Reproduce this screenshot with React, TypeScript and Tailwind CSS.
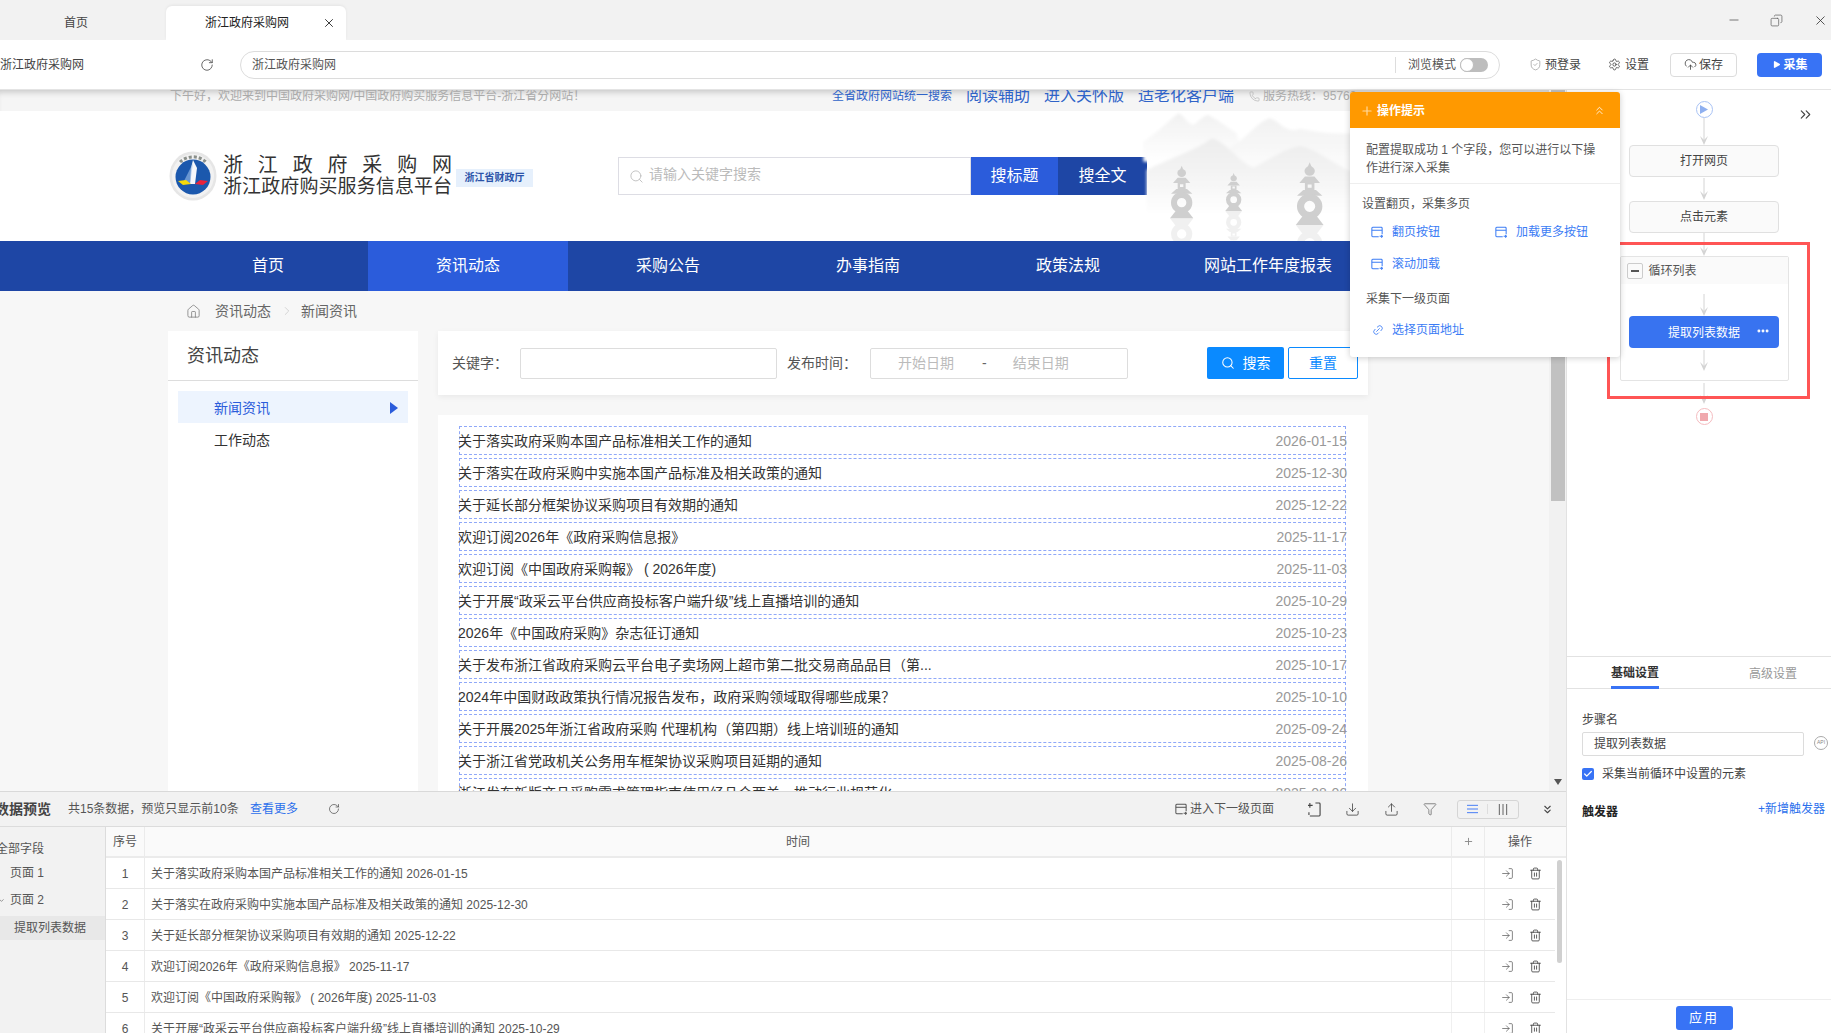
import React from "react";
import {
  RotateCw, X, ShieldCheck, Settings, Search, House, ChevronRight, ChevronsRight, ChevronsUp, ChevronsDown,
  Plus, Trash2, Upload, Download, Filter, Link2, LogIn, CloudUpload, Play, Minus, Ellipsis, Check, ChevronDown, Copy, Phone,
} from "lucide-react";

const listRows: [string, string][] = [
  ["关于落实政府采购本国产品标准相关工作的通知", "2026-01-15"],
  ["关于落实在政府采购中实施本国产品标准及相关政策的通知", "2025-12-30"],
  ["关于延长部分框架协议采购项目有效期的通知", "2025-12-22"],
  ["欢迎订阅2026年《政府采购信息报》", "2025-11-17"],
  ["欢迎订阅《中国政府采购報》 ( 2026年度)", "2025-11-03"],
  ["关于开展“政采云平台供应商投标客户端升级”线上直播培训的通知", "2025-10-29"],
  ["2026年《中国政府采购》杂志征订通知", "2025-10-23"],
  ["关于发布浙江省政府采购云平台电子卖场网上超市第二批交易商品品目（第...", "2025-10-17"],
  ["2024年中国财政政策执行情况报告发布，政府采购领域取得哪些成果？", "2025-10-10"],
  ["关于开展2025年浙江省政府采购 代理机构（第四期）线上培训班的通知", "2025-09-24"],
  ["关于浙江省党政机关公务用车框架协议采购项目延期的通知", "2025-08-26"],
  ["浙江发布新版商品采购需求管理指南使用经品合两关，推动行业规范化", "2025-08-06"],
];

const tableRows = listRows.slice(0, 6);

function PageIcon({ className }: { className?: string }) {
  return (
    <svg viewBox="0 0 14 14" className={className} fill="none" stroke="currentColor" strokeWidth="1.2">
      <path d="M9 12.5H2a1 1 0 0 1-1-1v-9a1 1 0 0 1 1-1h10a1 1 0 0 1 1 1v7" />
      <path d="M1 5h12" />
      <path d="M10 12h3.5M12 10.5l1.5 1.5-1.5 1.5" />
    </svg>
  );
}

function Arrow({ h }: { h: number }) {
  return (
    <svg width="10" height={h} viewBox={`0 0 10 ${h}`} className="block shrink-0">
      <line x1="5" y1="0" x2="5" y2={h - 4} stroke="#d4d4d4" strokeWidth="1" />
      <path d={`M1 ${h - 9} L5 ${h - 5} L9 ${h - 9} L5 ${h} Z`} fill="#d4d4d4" />
    </svg>
  );
}

function Pagoda({ x, base, s }: { x: number; base: number; s: number }) {
  const body = (
    <>
      <path d="M0 0L5 12H-5Z" />
      <ellipse cx="0" cy="22" rx="13" ry="12" />
      <path d="M-26 52H26L12 36H-12Z" />
      <path d="M-12 52H12V70H-12ZM-5 56V64H5V56Z" fillRule="evenodd" />
      <path d="M-32 84H32L16 70H-16Z" />
      <path fillRule="evenodd" d="M0 79a32 32 0 1 0 0 64a32 32 0 1 0 0-64ZM0 97a14 14 0 1 1 0 28a14 14 0 1 1 0-28Z" />
      <path d="M-35 158H35L18 136H-18Z" />
    </>
  );
  return (
    <g fill="#cfcfcf">
      <g transform={`translate(${x} ${base - 158 * s}) scale(${s})`}>{body}</g>
      <g transform={`translate(${x} ${base + 158 * s}) scale(${s} ${-s})`} opacity="0.3">{body}</g>
    </g>
  );
}

function Mountains() {
  return (
    <svg viewBox="0 18 660 390" className="absolute left-[1130px] top-0 w-[220px] h-[130px]">
      <defs>
        <linearGradient id="mfar" x1="0" y1="0" x2="0" y2="1">
          <stop offset="0" stopColor="#f1f1f1" />
          <stop offset="1" stopColor="#ffffff" />
        </linearGradient>
        <linearGradient id="mfront" x1="0" y1="0" x2="0" y2="1">
          <stop offset="0" stopColor="#ededed" />
          <stop offset="0.55" stopColor="#f5f5f5" />
          <stop offset="1" stopColor="#ffffff" />
        </linearGradient>
        <filter id="soft" x="-10%" y="-10%" width="120%" height="120%">
          <feGaussianBlur stdDeviation="4" />
        </filter>
      </defs>
      <g filter="url(#soft)">
        <path d="M40 110C80 85 120 45 145 25C160 28 172 58 190 60C205 50 220 32 235 30C255 40 285 62 320 85L340 170H40Z" fill="url(#mfar)" />
        <path d="M300 125C350 105 380 50 420 40C450 48 465 88 510 72C550 78 600 90 680 85V230H300Z" fill="url(#mfar)" />
        <path d="M50 195C120 160 200 135 245 100C290 110 330 175 370 188C410 170 460 130 510 122C560 130 610 180 680 205V330H50Z" fill="url(#mfront)" />
      </g>
      <Pagoda x={155} base={340} s={1} />
      <Pagoda x={311} base={318} s={0.72} />
      <Pagoda x={539} base={360} s={1.19} />
    </svg>
  );
}

function Emblem() {
  return (
    <svg viewBox="0 0 48 50" className="w-[48px] h-[50px] shrink-0">
      <ellipse cx="24" cy="25" rx="23.5" ry="24.5" fill="#e6e6e6" />
      <ellipse cx="24" cy="25" rx="21" ry="22" fill="#f2f2f2" />
      <path d="M11 11A19 19 0 0 1 37 11" fill="none" stroke="#8a8f8a" strokeWidth="3" strokeDasharray="3 2" />
      <circle cx="24" cy="26" r="17.5" fill="#1b58ad" />
      <path d="M24 9L28 17L26 33L21 33L22 17Z" fill="#f5f7fb" />
      <path d="M24 12L21 33L15 30Z" fill="#9cc0ea" opacity="0.6" />
      <path d="M9 30L17 29L22 33L14 34Z" fill="#f5d90a" />
      <path d="M39 30L31 29L26 33L34 34Z" fill="#e9233b" />
    </svg>
  );
}

function RowIcons() {
  return (
    <div className="w-[71px] flex items-center h-full border-l border-[#f0f0f0] pl-[16px] gap-[15px] text-[#555]">
      <LogIn size={13} strokeWidth={1.3} />
      <Trash2 size={13} strokeWidth={1.6} className="text-[#444]" />
    </div>
  );
}

export default function App() {
  return (
    <div className="relative w-[1831px] h-[1033px] overflow-hidden flex flex-col bg-white text-[#333] text-[12px] font-['Liberation_Sans','Noto_Sans_CJK_SC',sans-serif]">
      {/* tab bar */}
      <div className="h-[40px] shrink-0 bg-[#f2f2f2] flex items-end relative">
        <div className="w-[166px] h-[34px] flex items-center justify-center pr-[14px] text-[#444]">首页</div>
        <div className="w-[180px] h-[34px] bg-white rounded-t-md flex items-center pl-[39px] text-[#222] shadow-[0_-1px_3px_rgba(0,0,0,0.06)]">
          <span>浙江政府采购网</span>
          <X size={14} strokeWidth={1.5} className="ml-[33px]" />
        </div>
        <div className="ml-auto h-[40px] flex items-center text-[#666]">
          <Minus size={14} strokeWidth={1.5} className="mr-[29px]" />
          <Copy size={13} strokeWidth={1.4} className="mr-[30px] -scale-x-100" />
          <X size={15} strokeWidth={1.3} className="mr-[3px] text-[#333]" />
        </div>
      </div>
      {/* address toolbar */}
      <div className="h-[50px] shrink-0 bg-white border-b border-[#e4e4e4] flex items-center relative z-10 text-[#444] whitespace-nowrap">
        <span className="w-[84px] shrink-0">浙江政府采购网</span>
        <RotateCw size={14} strokeWidth={1.5} className="ml-[116px] shrink-0 text-[#555]" />
        <div className="ml-[26px] w-[1260px] h-[28px] border-[1.5px] border-[#dcdcdc] rounded-[14px] flex items-center pl-[11px] pr-[11px]">
          <span className="text-[#555]">浙江政府采购网</span>
          <div className="ml-auto flex items-center">
            <div className="w-px h-[16px] bg-[#ddd] mr-[12px]" />
            <span className="w-[52px] text-[#555]">浏览模式</span>
            <div className="w-[28px] h-[14px] rounded-full bg-[#bdbdbd] relative">
              <div className="absolute left-0 top-0 w-[14px] h-[14px] rounded-full bg-white border border-[#bdbdbd]" />
            </div>
          </div>
        </div>
        <ShieldCheck size={13} strokeWidth={1.3} className="ml-[29px] text-[#999]" />
        <span className="ml-[3px]">预登录</span>
        <Settings size={13} strokeWidth={1.5} className="ml-[27px]" />
        <span className="ml-[4px]">设置</span>
        <div className="ml-[21px] w-[67px] h-[24px] border border-[#dcdcdc] rounded-[4px] flex items-center justify-center gap-[2px]">
          <CloudUpload size={13} strokeWidth={1.5} />
          <span>保存</span>
        </div>
        <div className="ml-[20px] w-[65px] h-[24px] rounded-[4px] bg-[#3873f5] text-white font-bold flex items-center justify-center gap-[3px]">
          <Play size={9} fill="white" strokeWidth={0} />
          <span>采集</span>
        </div>
      </div>

      {/* work area */}
      <div className="flex-1 min-h-0 flex">
        <div className="w-[1566px] shrink-0 flex flex-col">
          {/* web view */}
          <div className="h-[701px] shrink-0 flex overflow-hidden">
            <div className="w-[1549px] shrink-0 flex flex-col bg-[#f7f7f7]">
              <div className="h-[21px] shrink-0 overflow-hidden bg-[#f5f5f5] shadow-[inset_0_6px_6px_-4px_rgba(0,0,0,0.2)] pl-[170px] flex items-center pb-[9px] whitespace-nowrap">
                <span className="text-[#aaa] w-[662px]">下午好，欢迎来到中国政府采购网/中国政府购买服务信息平台-浙江省分网站！</span>
                <span className="text-[#2f63c8]">全省政府网站统一搜索</span>
                <span className="text-[#2f63c8] text-[16px] ml-[14px]">阅读辅助</span>
                <span className="text-[#2f63c8] text-[16px] ml-[14px]">进入关怀版</span>
                <span className="text-[#2f63c8] text-[16px] ml-[14px]">适老化客户端</span>
                <Phone size={11} strokeWidth={1.3} className="ml-[15px] text-[#aaa]" />
                <span className="text-[#aaa] ml-[3px]">服务热线：95763</span>
              </div>
              <div className="relative h-[130px] shrink-0 bg-white flex items-center pl-[169px] overflow-hidden">
                <Mountains />
                <Emblem />
                <div className="ml-[6px] w-[229px] text-[#333]">
                  <div className="flex justify-between text-[20px] leading-[22px]">
                    {"浙江政府采购网".split("").map((c, i) => (
                      <span key={i}>{c}</span>
                    ))}
                  </div>
                  <div className="text-[19px] tracking-[0.1px] leading-[22px] whitespace-nowrap">浙江政府购买服务信息平台</div>
                </div>
                <div className="ml-[4px] mt-[3px] w-[77px] h-[18px] bg-[#e6f0fc] text-[#2a52a8] text-[10px] font-bold flex items-center justify-center">浙江省财政厅</div>
                <div className="ml-[85px] w-[353px] h-[38px] bg-white border border-[#dddde4] flex items-center pl-[10px] text-[14px] text-[#bbb]">
                  <Search size={15} strokeWidth={1.4} className="mr-[5px]" />
                  <span className="-mt-[3px]">请输入关键字搜索</span>
                </div>
                <div className="w-[87px] h-[38px] bg-[#2b5cdb] text-white text-[16px] flex items-center justify-center">搜标题</div>
                <div className="w-[89px] h-[38px] bg-[#1e46a5] text-white text-[16px] flex items-center justify-center">搜全文</div>
              </div>
              <div className="h-[50px] shrink-0 bg-[#1e46a5] flex pl-[168px] text-white text-[16px]">
                {["首页", "资讯动态", "采购公告", "办事指南", "政策法规", "网站工作年度报表"].map((n, i) => (
                  <div key={n} className={i === 1 ? "w-[200px] flex items-center justify-center bg-[#2b5cdb]" : "w-[200px] flex items-center justify-center"}>
                    {n}
                  </div>
                ))}
              </div>
              <div className="flex-1 min-h-0 pl-[168px] overflow-hidden">
                <div className="h-[40px] flex items-center text-[14px] text-[#666] pl-[18px]">
                  <House size={15} strokeWidth={1.2} className="text-[#777]" />
                  <span className="ml-[14px]">资讯动态</span>
                  <ChevronRight size={14} strokeWidth={1} className="ml-[9px] text-[#bbb]" />
                  <span className="ml-[7px]">新闻资讯</span>
                </div>
                <div className="flex gap-[20px]">
                  <div className="w-[250px] h-[500px] bg-white shrink-0">
                    <div className="h-[50px] border-b border-[#ddd] flex items-center pl-[19px] pt-[2px] text-[18px] text-[#444]">资讯动态</div>
                    <div className="mt-[10px] mx-[10px] h-[32px] bg-[#edf4fe] flex items-center pl-[36px] pr-[10px] pt-[2px] text-[14px] text-[#2b5cdb] justify-between">
                      <span>新闻资讯</span>
                      <svg width="8" height="12" viewBox="0 0 8 12"><path d="M0 0L8 6L0 12Z" fill="#2b5cdb" /></svg>
                    </div>
                    <div className="mx-[10px] h-[34px] flex items-center pl-[36px] text-[14px] text-[#333]">工作动态</div>
                  </div>
                  <div className="w-[930px] shrink-0">
                    <div className="h-[64px] bg-white flex items-center pl-[14px] text-[14px] text-[#555] shadow-[0_2px_6px_rgba(0,0,0,0.06)] whitespace-nowrap">
                      <span className="w-[68px] shrink-0">关键字：</span>
                      <div className="w-[257px] h-[31px] border border-[#ddd] rounded-[2px] shrink-0" />
                      <span className="ml-[10px] w-[83px] shrink-0">发布时间：</span>
                      <div className="w-[258px] h-[31px] border border-[#ddd] rounded-[2px] shrink-0 flex items-center text-[#bbb] pl-[27px]">
                        <span>开始日期</span>
                        <span className="ml-[28px] text-[#666]">-</span>
                        <span className="ml-[26px]">结束日期</span>
                      </div>
                      <div className="ml-[79px] w-[77px] h-[32px] shrink-0 rounded-[2px] bg-[#0a8aff] text-white flex items-center justify-center gap-[8px]">
                        <Search size={14} strokeWidth={1.8} />
                        <span>搜索</span>
                      </div>
                      <div className="ml-[4px] w-[70px] h-[32px] shrink-0 rounded-[2px] border border-[#0a8aff] text-[#0a8aff] flex items-center justify-center">重置</div>
                    </div>
                    <div className="mt-[20px] bg-white px-[21px] pt-[11px] h-[500px] text-[14px]">
                      {listRows.map(([t, d]) => (
                        <div key={d} className="h-[29px] mb-[3px] w-[887px] border border-dashed border-[#8fa8f8] flex items-center justify-between pt-[2px]">
                          <span className="-ml-[2px] text-[#333] whitespace-nowrap">{t}</span>
                          <span className="-mr-[2px] text-[#999] whitespace-nowrap">{d}</span>
                        </div>
                      ))}
                    </div>
                  </div>
                </div>
              </div>
            </div>
            {/* page scrollbar */}
            <div className="w-[17px] shrink-0 bg-[#f1f1f1] flex flex-col items-center">
              <div className="w-[14px] h-[411px] bg-[#c1c1c1]" />
              <svg width="8" height="6" viewBox="0 0 8 6" className="mt-auto mb-[6px]"><path d="M0 0H8L4 6Z" fill="#555" /></svg>
            </div>
          </div>
          {/* data preview */}
          <div className="flex-1 min-h-0 border-t border-[#d9d9d9] bg-[#f2f2f2] flex flex-col overflow-hidden">
            <div className="h-[35px] shrink-0 flex items-center border-b border-[#dcdcdc] whitespace-nowrap">
              <span className="-ml-[5px] w-[73px] text-[14px] font-bold text-[#444]">数据预览</span>
              <span className="w-[182px] text-[#555]">共15条数据，预览只显示前10条</span>
              <span className="text-[#2b6fec] w-[78px]">查看更多</span>
              <RotateCw size={12} strokeWidth={1.5} className="text-[#555]" />
              <div className="ml-auto flex items-center text-[#555]">
                <PageIcon className="w-[12px] h-[12px]" />
                <span className="ml-[3px] w-[118px]">进入下一级页面</span>
                <svg viewBox="0 0 14 16" className="w-[13px] h-[15px] mr-[24px]" fill="none" stroke="#444" strokeWidth="1.2">
                  <path d="M8 1H12a1 1 0 0 1 1 1V14a1 1 0 0 1-1 1H2" />
                  <path d="M1 11V14M2 1V6M0 3.5H5" />
                </svg>
                <Download size={15} strokeWidth={1.3} className="mr-[24px] text-[#444]" />
                <Upload size={15} strokeWidth={1.3} className="mr-[24px] text-[#444]" />
                <Filter size={14} strokeWidth={1.3} className="mr-[20px] text-[#666]" />
                <div className="w-[62px] h-[19px] border border-[#d5d5d5] rounded-[3px] flex items-center">
                  <svg viewBox="0 0 12 10" className="w-[11px] h-[10px] ml-[9px]" stroke="#3873f5" strokeWidth="1"><path d="M0 1H12M0 5H12M0 9H12" /></svg>
                  <div className="w-px h-[10px] bg-[#ddd] ml-[9px]" />
                  <svg viewBox="0 0 10 12" className="w-[10px] h-[11px] ml-[10px]" stroke="#555" strokeWidth="1"><path d="M1 0V12M5 0V12M9 0V12" /></svg>
                </div>
                <ChevronsDown size={13} strokeWidth={2} className="ml-[22px] mr-[12px] text-[#444]" />
              </div>
            </div>
            <div className="flex-1 min-h-0 flex">
              <div className="w-[106px] shrink-0 border-r border-[#dcdcdc] whitespace-nowrap text-[#555] pt-[13px]">
                <div className="-ml-[4px] h-[18px] flex items-center">全部字段</div>
                <div className="mt-[6px] pl-[10px] h-[18px] flex items-center">页面 1</div>
                <div className="mt-[9px] h-[18px] flex items-center">
                  <ChevronDown size={7} strokeWidth={2} className="-ml-[2px] mr-[5px]" />
                  <span>页面 2</span>
                </div>
                <div className="mt-[7px] h-[24px] bg-[#e8e8e8] pl-[14px] flex items-center">提取列表数据</div>
              </div>
              <div className="flex-1 min-w-0 bg-white relative">
                <div className="h-[31px] flex bg-[#fafafa] border-b-2 border-[#ebebeb] text-[#555] pr-[11px]">
                  <div className="w-[39px] flex items-center justify-center border-r border-[#ebebeb]">序号</div>
                  <div className="flex-1 flex items-center justify-center pt-[1px]">时间</div>
                  <div className="w-[33px] flex items-center justify-center border-l border-[#ebebeb]"><Plus size={11} strokeWidth={2} className="text-[#888]" /></div>
                  <div className="w-[71px] flex items-center justify-center border-l border-[#ebebeb]">操作</div>
                </div>
                {tableRows.map(([t, d], i) => (
                  <div key={d} className="h-[31px] flex border-b border-[#e8e8e8] mr-[11px] text-[#555]">
                    <div className="w-[39px] flex items-center justify-center border-r border-[#ebebeb] pt-[1px]">{i + 1}</div>
                    <div className="flex-1 flex items-center pl-[6px] pt-[1px] whitespace-nowrap">{t} {d}</div>
                    <div className="w-[33px] border-l border-[#f0f0f0]" />
                    <RowIcons />
                  </div>
                ))}
                <div className="absolute right-[4px] top-[33px] w-[5px] h-[103px] rounded bg-[#d0d0d0]" />
              </div>
            </div>
          </div>
        </div>

        {/* right panel */}
        <div className="flex-1 min-w-0 border-l border-[#e2e2e2] flex flex-col bg-white">
          <div className="h-[566px] shrink-0 relative flex flex-col items-center pl-[10px]">
            <div className="mt-[11px] w-[17px] h-[17px] rounded-full border-[1.5px] border-[#a9c3f5] flex items-center justify-center">
              <svg width="8" height="9" viewBox="0 0 8 9"><path d="M0 0L8 4.5L0 9Z" fill="#8fb0f0" /></svg>
            </div>
            <Arrow h={27} />
            <div className="w-[150px] h-[32px] shrink-0 border border-[#e0e0e0] rounded-[4px] bg-[#fafafa] flex items-center justify-center text-[#444]">打开网页</div>
            <div className="mt-[1px]"><Arrow h={22} /></div>
            <div className="mt-[1px] w-[150px] h-[32px] shrink-0 border border-[#e0e0e0] rounded-[4px] bg-[#fafafa] flex items-center justify-center text-[#444]">点击元素</div>
            <Arrow h={23} />
            <div className="w-[169px] h-[125px] shrink-0 border border-[#e4e4e4] rounded-[2px] flex flex-col items-center">
              <div className="w-full h-[27px] bg-[#fafafa] flex items-center pl-[6px] text-[#555]">
                <div className="w-[16px] h-[16px] border border-[#ccc] rounded-[2px] flex items-center justify-center">
                  <div className="w-[8px] h-[2px] bg-[#555]" />
                </div>
                <span className="ml-[6px]">循环列表</span>
              </div>
              <div className="mt-[10px]"><Arrow h={22} /></div>
              <div className="w-[150px] h-[32px] rounded-[4px] bg-[#3873f0] text-white flex items-center justify-center relative pt-[1px]">
                <span>提取列表数据</span>
                <Ellipsis size={14} strokeWidth={3} className="absolute right-[9px] top-[8px]" />
              </div>
              <div className="mt-[2px]"><Arrow h={21} /></div>
            </div>
            <div className="mt-[2px]"><Arrow h={21} /></div>
            <div className="mt-[4px] w-[17px] h-[17px] rounded-full border-[1.5px] border-[#f5bcc0] flex items-center justify-center">
              <div className="w-[8px] h-[8px] bg-[#f0a9ae]" />
            </div>
            <ChevronsRight size={17} strokeWidth={1.6} className="absolute right-[17px] top-[16px] text-[#444]" />
            {/* annotation frame */}
            <div className="absolute left-[40px] top-[152px] w-[203px] h-[157px] border-[3px] border-[#ff5555] pointer-events-none" />
          </div>
          <div className="h-[33px] shrink-0 border-y border-[#e2e2e2] flex items-stretch">
            <div className="ml-[44px] w-[48px] flex items-center justify-center pt-[3px] font-bold text-[#333] border-b-[3px] border-[#3873f5] -mb-px">基础设置</div>
            <div className="ml-[90px] w-[48px] flex items-center justify-center pt-[2px] text-[#999]">高级设置</div>
          </div>
          <div className="flex-1 min-h-0 px-[15px] pt-[22px] relative">
            <div className="h-[18px] flex items-center text-[#444]">步骤名</div>
            <div className="mt-[3px] w-[222px] h-[24px] border border-[#dcdcdc] rounded-[2px] flex items-center pl-[11px] text-[#444]">提取列表数据</div>
            <div className="absolute left-[247px] top-[47px] w-[14px] h-[14px] rounded-full border border-[#aaa] flex items-center justify-center text-[5px] text-[#888]">API</div>
            <div className="mt-[12px] flex items-center h-[12px]">
              <div className="w-[12px] h-[12px] rounded-[2px] bg-[#3873f5] flex items-center justify-center">
                <Check size={10} strokeWidth={3} className="text-white" />
              </div>
              <span className="ml-[8px] text-[#444]">采集当前循环中设置的元素</span>
            </div>
            <div className="mt-[20px] flex items-start justify-between h-[18px] whitespace-nowrap">
              <span className="font-bold text-[#222] mt-[3px]">触发器</span>
              <span className="text-[#2b6fec] mr-[-9px]">+新增触发器</span>
            </div>
          </div>
          <div className="h-[34px] shrink-0 border-t border-[#eeeeee] flex justify-center pt-[6px] pl-[10px]">
            <div className="w-[57px] h-[24px] rounded-[3px] bg-[#3873f5] text-white tracking-[2px] flex items-center justify-center text-[13px]">应用</div>
          </div>
        </div>
      </div>

      {/* operation tips popover */}
      <div className="absolute left-[1350px] top-[92px] w-[270px] h-[265px] bg-white rounded-[3px] shadow-[0_1px_6px_rgba(0,0,0,0.2)] z-20 overflow-hidden whitespace-nowrap">
        <div className="h-[36px] bg-[#ff9900] text-white flex items-center pl-[10px] pr-[14px] pt-[1px] font-bold">
          <Plus size={14} strokeWidth={2} className="text-[#ffd9a0]" />
          <span className="ml-[3px]">操作提示</span>
          <ChevronsUp size={13} strokeWidth={1.5} className="ml-auto" />
        </div>
        <div className="h-[56px] border-b border-[#eeeeee] pl-[16px] pt-[13px] leading-[18px] text-[#555] whitespace-normal w-[270px]">
          <div className="w-[232px]">配置提取成功 1 个字段，您可以进行以下操作进行深入采集</div>
        </div>
        <div className="mt-[11px] h-[18px] pl-[12px] text-[#555] flex items-center">设置翻页，采集多页</div>
        <div className="mt-[10px] h-[18px] flex items-center text-[#3b7cf5] pl-[21px]">
          <PageIcon className="w-[12px] h-[12px]" />
          <span className="ml-[9px] w-[103px]">翻页按钮</span>
          <PageIcon className="w-[12px] h-[12px]" />
          <span className="ml-[9px]">加载更多按钮</span>
        </div>
        <div className="mt-[14px] h-[18px] flex items-center text-[#3b7cf5] pl-[21px]">
          <PageIcon className="w-[12px] h-[12px]" />
          <span className="ml-[9px]">滚动加载</span>
        </div>
        <div className="mt-[17px] h-[18px] pl-[16px] text-[#555] flex items-center">采集下一级页面</div>
        <div className="mt-[13px] h-[18px] flex items-center text-[#3b7cf5] pl-[22px]">
          <Link2 size={12} strokeWidth={1.6} className="-rotate-45" />
          <span className="ml-[8px]">选择页面地址</span>
        </div>
      </div>
    </div>
  );
}
